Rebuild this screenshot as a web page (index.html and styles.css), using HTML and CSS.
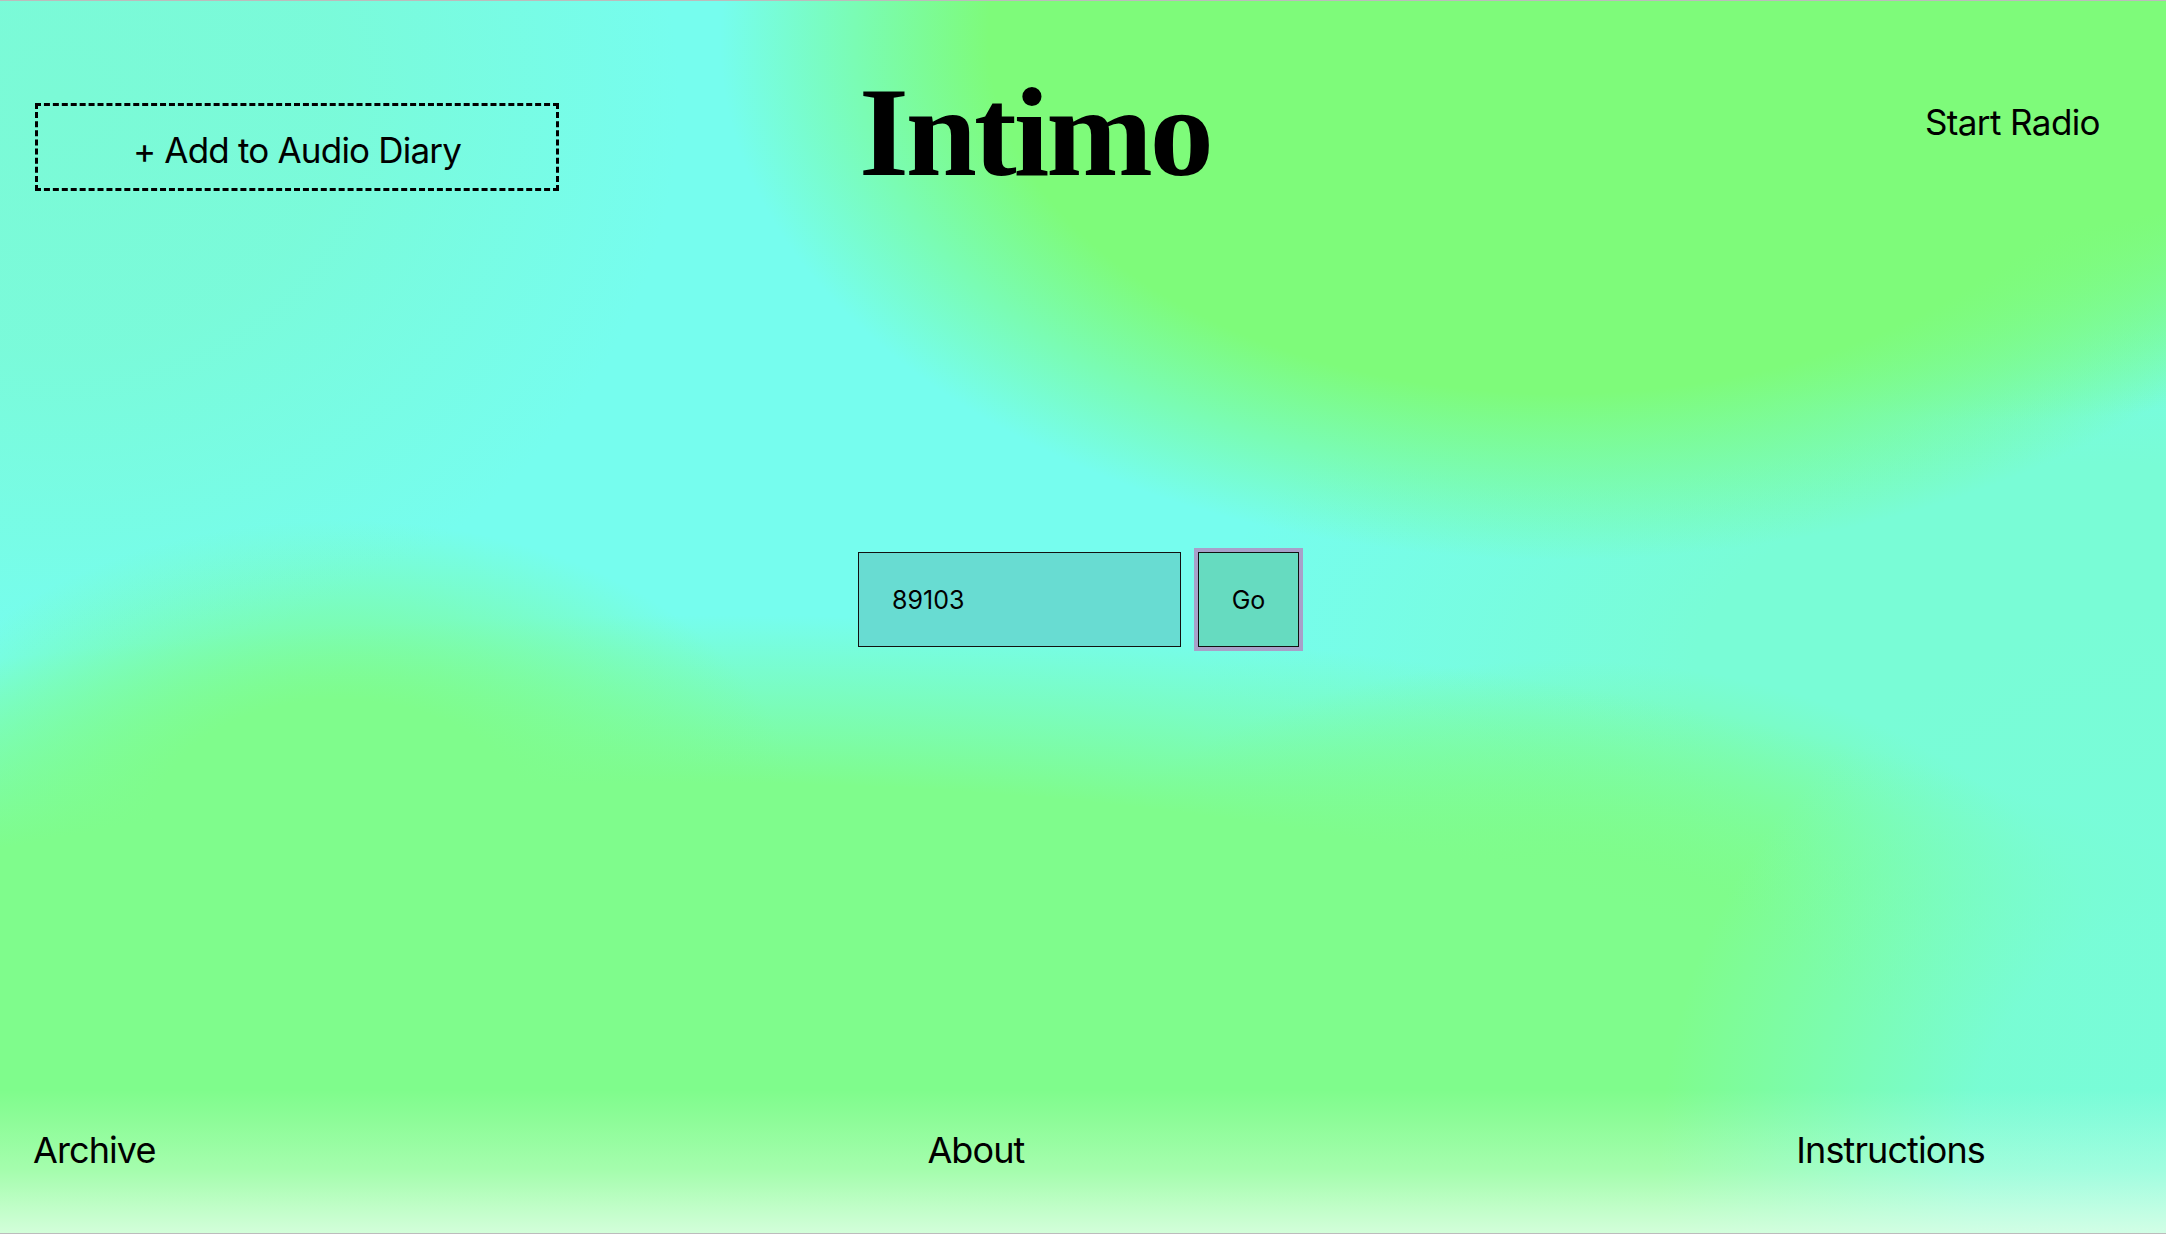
FILE: index.html
```html
<!DOCTYPE html>
<html lang="en">
<head>
<meta charset="utf-8">
<title>Intimo</title>
<link rel="stylesheet" href="styles.css">
</head>
<body>
<div class="page">
  <header class="header">
    <button class="add-btn">+ Add to Audio Diary</button>
    <h1 class="title">Intimo</h1>
    <a class="radio" href="#">Start Radio</a>
  </header>
  <main class="main">
    <form class="code-form">
      <input class="code-input" type="text" value="89103">
      <button class="go-btn" type="button">Go</button>
    </form>
  </main>
  <footer class="footer">
    <a class="foot-link" href="#">Archive</a>
    <a class="foot-link" href="#">About</a>
    <a class="foot-link" href="#">Instructions</a>
  </footer>
</div>
</body>
</html>
```
FILE: styles.css
```css
* { box-sizing: border-box; }
html, body { margin: 0; padding: 0; }
body {
  width: 2166px;
  height: 1234px;
  overflow: hidden;
  font-family: Inter, "Liberation Sans", sans-serif;
  color: #000;
  background-color: #76fdee;
  background-image:
    linear-gradient(to bottom, rgba(235,255,235,0) 1090px, rgba(235,255,235,0.35) 1170px, rgba(226,255,232,0.85) 1234px),
    radial-gradient(ellipse 620px 560px at 60px 100px, rgba(123,250,214,1) 0%, rgba(123,250,214,0.85) 45%, rgba(123,250,214,0) 100%),
    radial-gradient(ellipse 560px 560px at 2220px 1160px, rgba(120,252,218,1) 0%, rgba(120,252,218,0.9) 45%, rgba(120,252,218,0) 100%),
    radial-gradient(ellipse 840px 520px at 1560px 40px, rgba(126,251,122,1) 0%, rgba(126,251,122,1) 68%, rgba(126,251,122,0) 100%),
    radial-gradient(ellipse 720px 420px at 2000px 0px, rgba(126,251,122,1) 0%, rgba(126,251,122,1) 55%, rgba(126,251,122,0) 100%),
    radial-gradient(ellipse 460px 300px at 340px 820px, rgba(127,252,140,1) 0%, rgba(127,252,140,1) 40%, rgba(127,252,140,0) 100%),
    radial-gradient(ellipse 1800px 560px at 700px 1175px, rgba(127,252,140,1) 0%, rgba(127,252,140,1) 70%, rgba(127,252,140,0) 100%),
    radial-gradient(ellipse 560px 360px at 1560px 1020px, rgba(127,252,136,1) 0%, rgba(127,252,136,1) 45%, rgba(127,252,136,0) 100%),
    radial-gradient(ellipse 900px 480px at 2100px 680px, rgba(121,252,214,1) 0%, rgba(121,252,214,1) 45%, rgba(121,252,214,0) 100%);
  border-top: 1px solid #bcbcbc;
  border-bottom: 1px solid #bcbcbc;
}
.page {
  height: 100%;
  display: flex;
  flex-direction: column;
}
.header {
  display: flex;
  align-items: flex-start;
  padding: 0 66px 0 35px;
}
.add-btn {
  margin-top: 102px;
  width: 524px;
  height: 88px;
  border: 3px dashed #000;
  background: transparent;
  font-family: Inter, "Liberation Sans", sans-serif;
  font-size: 35px;
  line-height: 42px;
  letter-spacing: -0.8px;
  color: #000;
  padding: 6px 0 0 0;
  cursor: pointer;
}
.title {
  margin: 67px 0 0 300px;
  font-family: "Liberation Serif", "Times New Roman", serif;
  font-weight: 700;
  font-size: 128px;
  line-height: 128px;
  letter-spacing: -3px;
}
.radio {
  margin: 100px 0 0 auto;
  font-size: 35px;
  line-height: 42px;
  letter-spacing: -0.6px;
  color: #000;
  text-decoration: none;
}
.main {
  flex: 1;
  display: flex;
  align-items: center;
  justify-content: center;
  padding: 0 9px 126px 0;
}
.code-form {
  display: flex;
  gap: 17px;
}
.code-input {
  width: 323px;
  height: 95px;
  border: 1.5px solid #111;
  background: #68dcd2;
  font-family: Inter, "Liberation Sans", sans-serif;
  font-size: 25px;
  padding: 0 0 0 33px;
  color: #000;
  border-radius: 0;
  outline: none;
}
.go-btn {
  width: 101px;
  height: 95px;
  border: 1.5px solid #111;
  background: #66dbc0;
  font-family: Inter, "Liberation Sans", sans-serif;
  font-size: 25px;
  color: #000;
  padding: 0;
  border-radius: 0;
  outline: 4px solid rgba(190, 120, 186, 0.7);
  outline-offset: 0;
}
.footer {
  display: flex;
  justify-content: space-between;
  padding: 0 181px 61px 33px;
}
.foot-link {
  font-size: 36px;
  line-height: 43px;
  letter-spacing: -0.9px;
  color: #000;
  text-decoration: none;
}
```
